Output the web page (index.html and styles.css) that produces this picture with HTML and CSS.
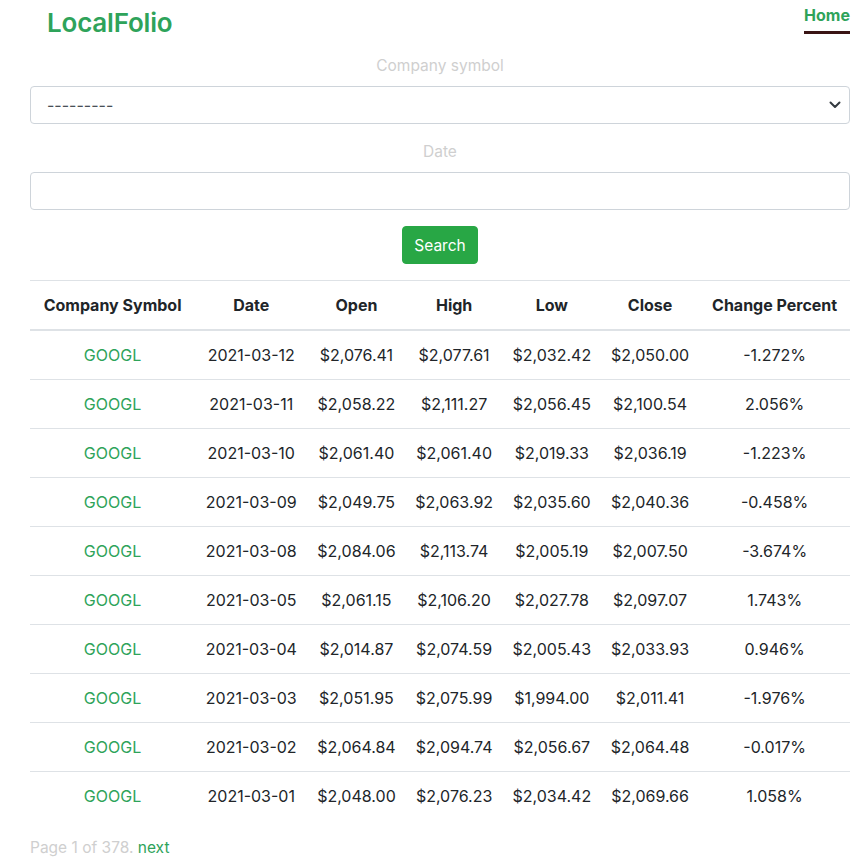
FILE: index.html
```html
<!DOCTYPE html>
<html>
<head>
<meta charset="utf-8">
<link rel="stylesheet" href="styles.css">
</head>
<body>
<nav class="navbar">
  <a class="brand" href="#">LocalFolio</a>
  <a class="nav-home" href="#">Home</a>
</nav>
<main class="container">
  <form class="search-form">
    <label class="field-label">Company symbol</label>
    <div class="select-wrap">
      <select class="control">
        <option>---------</option>
      </select>
      <svg class="chev" width="12" height="8" viewBox="0 0 12 8"><path d="M1.5 1.5 L6 6 L10.5 1.5" fill="none" stroke="#343a40" stroke-width="2" stroke-linecap="round" stroke-linejoin="round"/></svg>
    </div>
    <label class="field-label">Date</label>
    <input class="control" type="text">
    <button class="btn" type="button">Search</button>
  </form>
  <table class="table">
    <thead>
      <tr><th>Company Symbol</th><th>Date</th><th>Open</th><th>High</th><th>Low</th><th>Close</th><th>Change Percent</th></tr>
    </thead>
    <tbody>
      <tr><td><a href="#">GOOGL</a></td><td>2021-03-12</td><td>$2,076.41</td><td>$2,077.61</td><td>$2,032.42</td><td>$2,050.00</td><td>-1.272%</td></tr>
      <tr><td><a href="#">GOOGL</a></td><td>2021-03-11</td><td>$2,058.22</td><td>$2,111.27</td><td>$2,056.45</td><td>$2,100.54</td><td>2.056%</td></tr>
      <tr><td><a href="#">GOOGL</a></td><td>2021-03-10</td><td>$2,061.40</td><td>$2,061.40</td><td>$2,019.33</td><td>$2,036.19</td><td>-1.223%</td></tr>
      <tr><td><a href="#">GOOGL</a></td><td>2021-03-09</td><td>$2,049.75</td><td>$2,063.92</td><td>$2,035.60</td><td>$2,040.36</td><td>-0.458%</td></tr>
      <tr><td><a href="#">GOOGL</a></td><td>2021-03-08</td><td>$2,084.06</td><td>$2,113.74</td><td>$2,005.19</td><td>$2,007.50</td><td>-3.674%</td></tr>
      <tr><td><a href="#">GOOGL</a></td><td>2021-03-05</td><td>$2,061.15</td><td>$2,106.20</td><td>$2,027.78</td><td>$2,097.07</td><td>1.743%</td></tr>
      <tr><td><a href="#">GOOGL</a></td><td>2021-03-04</td><td>$2,014.87</td><td>$2,074.59</td><td>$2,005.43</td><td>$2,033.93</td><td>0.946%</td></tr>
      <tr><td><a href="#">GOOGL</a></td><td>2021-03-03</td><td>$2,051.95</td><td>$2,075.99</td><td>$1,994.00</td><td>$2,011.41</td><td>-1.976%</td></tr>
      <tr><td><a href="#">GOOGL</a></td><td>2021-03-02</td><td>$2,064.84</td><td>$2,094.74</td><td>$2,056.67</td><td>$2,064.48</td><td>-0.017%</td></tr>
      <tr><td><a href="#">GOOGL</a></td><td>2021-03-01</td><td>$2,048.00</td><td>$2,076.23</td><td>$2,034.42</td><td>$2,069.66</td><td>1.058%</td></tr>
    </tbody>
  </table>
  <div class="pagination">Page 1 of 378. <a href="#">next</a></div>
</main>
</body>
</html>
```
FILE: styles.css
```css
* { box-sizing: border-box; }
html, body { margin: 0; padding: 0; background: #fff; }
body {
  font-family: Inter, "Liberation Sans", sans-serif;
  font-size: 16px;
  line-height: 24px;
  color: #212529;
}
a { color: #2ea35a; text-decoration: none; }

.navbar {
  display: flex;
  justify-content: space-between;
  align-items: flex-start;
  height: 48px;
  padding: 0 17px 0 47px;
}
.brand {
  font-size: 26px;
  font-weight: 600;
  line-height: 30px;
  margin-top: 8px;
  letter-spacing: -0.2px;
}
.nav-home {
  font-weight: 700;
  font-size: 16px;
  line-height: 20px;
  margin-top: 5px;
  padding-bottom: 6px;
  border-bottom: 3px solid #3a1414;
}

.container {
  padding: 0 17px 0 30px;
}
.search-form {
  display: flex;
  flex-direction: column;
  align-items: center;
}
.field-label {
  color: #cfcfcf;
  font-size: 15.5px;
  line-height: 22px;
  margin: 7px 0 9px;
}
.select-wrap { position: relative; width: 100%; }
.control {
  width: 100%;
  height: 38px;
  border: 1px solid #ced4da;
  border-radius: 4px;
  background: #fff;
  font: inherit;
  color: #495057;
  padding: 0 16px;
  appearance: none;
  -webkit-appearance: none;
  display: block;
}
.chev {
  position: absolute;
  right: 9px;
  top: 15px;
}
.select-wrap + .field-label { margin-top: 17px; }
.btn {
  margin-top: 16px;
  background: #28a745;
  color: #fff;
  border: 1px solid #28a745;
  border-radius: 4px;
  font: inherit;
  font-size: 15.5px;
  height: 38px;
  padding: 1px 11px 0;
}

.table {
  width: 100%;
  border-collapse: collapse;
  margin-top: 16px;
}
.table th, .table td {
  text-align: center;
  padding: 12px 4px;
  border-top: 1px solid #dee2e6;
  white-space: nowrap;
}
.table th {
  font-weight: 700;
  font-size: 16px;
  border-bottom: 2px solid #dee2e6;
}
.table td { font-size: 16px; }

.pagination {
  color: #cfcfcf;
  font-size: 15.5px;
  margin-top: 16px;
}
.pagination a { color: #2ea35a; }
```
